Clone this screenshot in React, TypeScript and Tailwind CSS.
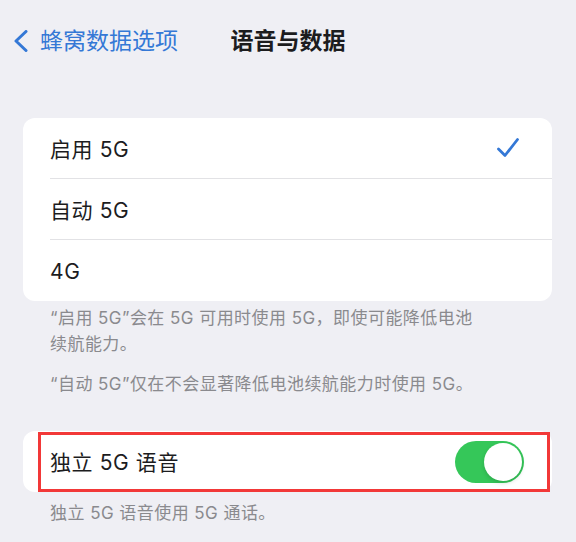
export default function App() {
  const options = [
    { label: "启用 5G", checked: true },
    { label: "自动 5G", checked: false },
    { label: "4G", checked: false },
  ];

  return (
    <div
      className="w-[576px] h-[542px] overflow-hidden bg-[#efeff4] text-[#1c1c1e]"
      style={{ fontFamily: 'Inter, "Noto Sans CJK SC", sans-serif' }}
    >
      {/* nav bar */}
      <header className="grid grid-cols-[1fr_auto_1fr] items-center h-[50px] mt-[16px]">
        <div className="flex items-center pl-[13px] text-[#3478d6]">
          <svg width="16" height="22" viewBox="0 0 16 22" fill="none">
            <path
              d="M13 1.5 L3 11 L13 20.5"
              stroke="currentColor"
              strokeWidth="3"
              strokeLinecap="round"
              strokeLinejoin="round"
            />
          </svg>
          <span className="ml-[11px] text-[23px] leading-none">蜂窝数据选项</span>
        </div>
        <h1 className="text-[23px] leading-none font-bold">语音与数据</h1>
        <div />
      </header>

      {/* network mode */}
      <section className="mt-[52px] mx-[23px] w-[529px] rounded-[12px] bg-white overflow-hidden">
        {options.map((o, i) => (
          <div key={o.label} className="flex items-stretch h-[61px] pl-[27px]">
            <div
              className={`flex flex-1 items-center justify-between pr-[32px] ${
                i < options.length - 1 ? "border-b border-[#e2e2e5]" : ""
              }`}
            >
              <span className="text-[21px] leading-none tracking-[0.6px] pt-[2px]">{o.label}</span>
              {o.checked && (
                <svg width="24" height="22" viewBox="0 0 24 22" fill="none" className="text-[#3478d6]">
                  <path
                    d="M2.5 12 L9 18.5 L21.5 2.5"
                    stroke="currentColor"
                    strokeWidth="2.8"
                    strokeLinecap="round"
                    strokeLinejoin="round"
                  />
                </svg>
              )}
            </div>
          </div>
        ))}
      </section>

      <div className="mt-[4px] pl-[50px] text-[17px] leading-[26px] tracking-[0.45px] text-[#8a8a8e] whitespace-nowrap">
        <p>
          “启用 5G”会在 5G 可用时使用 5G，即使可能降低电池
          <br />
          续航能力。
        </p>
        <p className="mt-[14px]">“自动 5G”仅在不会显著降低电池续航能力时使用 5G。</p>
      </div>

      {/* standalone voice */}
      <section className="relative mt-[34px] mx-[23px] w-[529px] h-[61px] rounded-[12px] bg-white flex items-center justify-between pl-[27px] pr-[28px]">
        <span className="text-[21px] leading-none tracking-[0.6px] pt-[2px]">独立 5G 语音</span>
        <div className="w-[69px] h-[42px] rounded-full bg-[#35c759] flex items-center justify-end p-[2px]">
          <div className="w-[38px] h-[38px] rounded-full bg-white shadow-[0_2px_4px_rgba(0,0,0,0.15)]" />
        </div>
        <div className="absolute left-[15px] right-[2px] top-[1px] bottom-0 border-[3px] border-[#f23838] pointer-events-none" />
      </section>

      <p className="mt-[8px] pl-[50px] text-[17px] leading-[26px] tracking-[0.45px] text-[#8a8a8e]">独立 5G 语音使用 5G 通话。</p>
    </div>
  );
}
